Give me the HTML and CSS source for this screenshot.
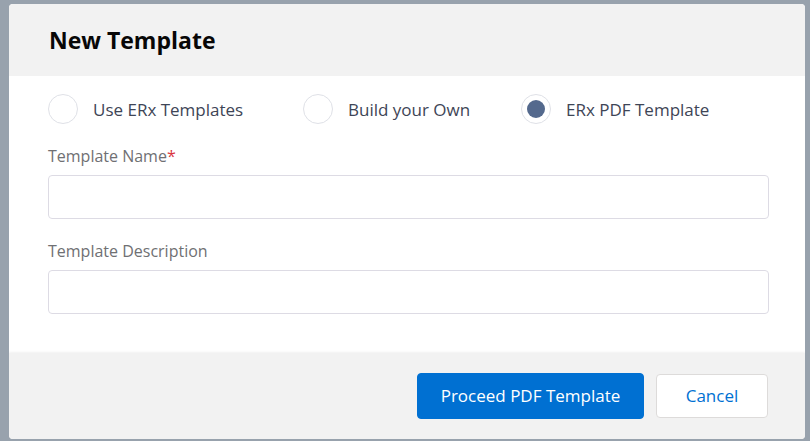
FILE: index.html
```html
<!DOCTYPE html>
<html>
<head>
<meta charset="utf-8">
<link rel="stylesheet" href="styles.css">
</head>
<body>
<div class="modal">
  <div class="modal-header">
    <h2 class="title">New Template</h2>
  </div>
  <div class="modal-body">
    <div class="radio-row">
      <label class="radio r1"><span class="radio-circle"></span><span class="radio-text">Use ERx Templates</span></label>
      <label class="radio r2"><span class="radio-circle"></span><span class="radio-text">Build your Own</span></label>
      <label class="radio checked"><span class="radio-circle"><span class="radio-dot"></span></span><span class="radio-text">ERx PDF Template</span></label>
    </div>
    <div class="field first">
      <div class="field-label">Template Name<abbr class="req">*</abbr></div>
      <div class="input"></div>
    </div>
    <div class="field">
      <div class="field-label">Template Description</div>
      <div class="input"></div>
    </div>
  </div>
  <div class="modal-footer">
    <button class="btn btn-brand">Proceed PDF Template</button>
    <button class="btn btn-neutral">Cancel</button>
  </div>
</div>
</body>
</html>
```
FILE: styles.css
```css
html, body {
  margin: 0;
  padding: 0;
}
body {
  background: #98a2ad;
  width: 810px;
  height: 441px;
  font-family: "Open Sans", Lato, sans-serif;
  padding: 4px 0 0 9px;
  box-sizing: border-box;
}
.modal {
  width: 796px;
  height: 435px;
  border-radius: 4px;
  overflow: hidden;
  display: flex;
  flex-direction: column;
  background: #fff;
}
.modal-header {
  background: #f2f2f2;
  height: 72px;
  display: flex;
  align-items: center;
  padding-left: 40px;
  box-sizing: border-box;
}
.title {
  margin: 0;
  font-size: 23px;
  font-weight: 700;
  color: #080707;
  padding-bottom: 1px;
}
.modal-body {
  flex: 1;
  padding: 18px 36px 0 39px;
}
.radio-row {
  display: flex;
  align-items: center;
  height: 30px;
}
.radio {
  display: flex;
  align-items: center;
}
.r1 {
  width: 255px;
}
.r2 {
  width: 218px;
}
.radio-circle {
  flex: none;
  width: 30px;
  height: 30px;
  border: 1px solid #dfe1e7;
  border-radius: 50%;
  box-sizing: border-box;
  display: flex;
  align-items: center;
  justify-content: center;
  background: #fff;
}
.radio-dot {
  width: 18px;
  height: 18px;
  border-radius: 50%;
  background: #54698d;
}
.radio-text {
  margin-left: 15px;
  font-size: 17px;
  color: #3e4556;
}
.field {
  margin-top: 22px;
}
.field.first {
  margin-top: 22px;
}
.field-label {
  font-size: 16px;
  color: #6f7073;
  line-height: 21px;
  margin-bottom: 8px;
}
.req {
  color: #d9363e;
  text-decoration: none;
}
.input {
  height: 44px;
  border: 1px solid #dddbe4;
  border-radius: 4px;
  box-sizing: border-box;
  width: 721px;
  background: #fff;
}
.modal-footer {
  height: 86px;
  background: #f2f2f2;
  box-shadow: 0 -1px 2px rgba(0,0,0,0.06);
  display: flex;
  justify-content: flex-end;
  align-items: center;
  padding-right: 37px;
  box-sizing: border-box;
  padding-bottom: 1px;
}
.btn {
  font-family: "Open Sans", Lato, sans-serif;
  font-size: 17px;
  height: 46px;
  border-radius: 4px;
  cursor: pointer;
}
.btn-brand {
  width: 227px;
  background: #0070d2;
  color: #fff;
  border: 1px solid #0070d2;
}
.btn-neutral {
  width: 112px;
  height: 44px;
  margin-left: 12px;
  background: #fff;
  color: #0070d2;
  border: 1px solid #dddbda;
}
```
